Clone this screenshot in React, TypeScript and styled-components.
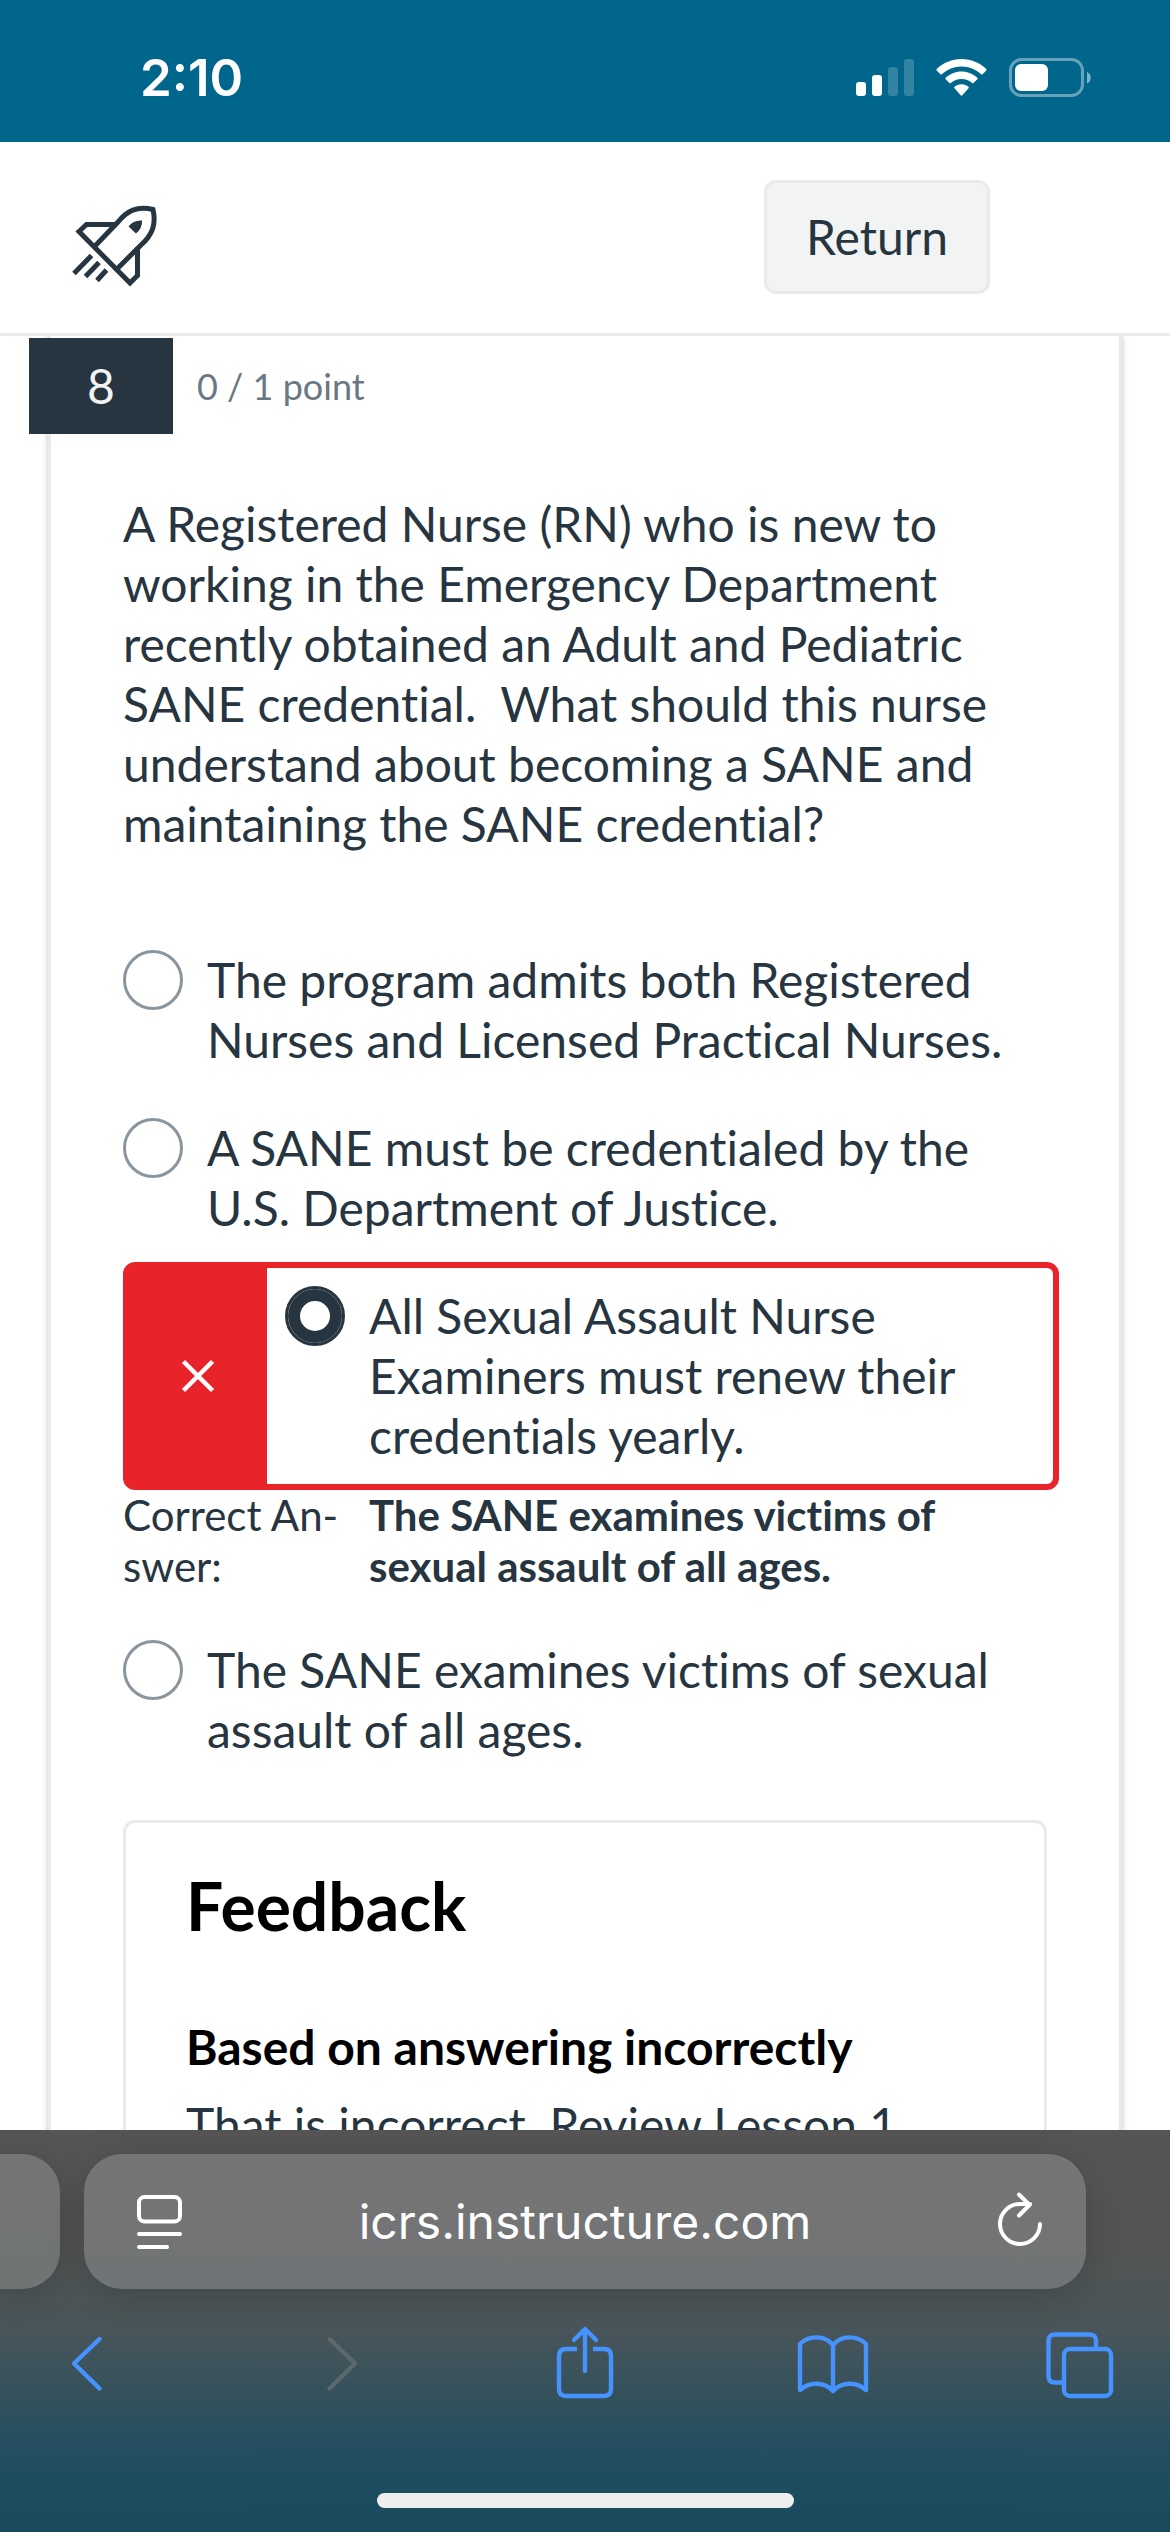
import React from "react";
import styled, { createGlobalStyle } from "styled-components";

const ink = "#273540";
const red = "#e8242a";
const line = "#e8eaec";
const blue = "#4693ff";

const GlobalStyle = createGlobalStyle`
  *, *::before, *::after { box-sizing: border-box; }
  html, body { margin: 0; padding: 0; background: #fff; }
  body {
    font-family: Lato, "Open Sans", sans-serif;
    font-variant-ligatures: none;
    color: ${ink};
  }
  button, input { font: inherit; color: inherit; }
  p, h2, h3 { margin: 0; }
  svg { display: block; }
`;

const Screen = styled.div`
  display: flex;
  flex-direction: column;
  height: 100vh;
  overflow: hidden;
`;

const StatusBar = styled.div`
  display: flex;
  flex: none;
  align-items: center;
  justify-content: space-between;
  height: 142px;
  padding: 14px 78px 0 140px;
  background: #00668c;
  color: #fff;
`;

const Clock = styled.time`
  font: 600 51px/60px Inter, sans-serif;
`;

const StatusIcons = styled.div`
  display: flex;
  align-items: center;
  gap: 22px;
`;

const Header = styled.header`
  display: flex;
  flex: none;
  align-items: center;
  justify-content: space-between;
  height: 194px;
  padding: 0 180px 2px 66px;
  border-bottom: 3px solid ${line};
  background: #fff;
`;

const LogoLink = styled.a`
  display: block;
  padding-top: 18px;
  color: ${ink};
`;

const ReturnButton = styled.button`
  height: 114px;
  padding: 0 39px;
  border: 3px solid ${line};
  border-radius: 12px;
  background: #f2f4f4;
  font-size: 48px;
  line-height: 60px;
`;

const Main = styled.main`
  flex: 1;
  min-height: 0;
  padding: 0 48px;
  overflow: hidden;
`;

const QuestionCard = styled.section`
  min-height: 100%;
  padding-top: 2px;
  border: solid ${line};
  border-width: 0 3px;
  box-shadow: 0 0 6px rgba(0, 0, 0, 0.25);
`;

const QuestionHeader = styled.div`
  display: flex;
  align-items: center;
  gap: 24px;
  margin-left: -22px;
`;

const QuestionNumber = styled.div`
  width: 144px;
  background: ${ink};
  color: #f2f4f4;
  font-size: 48px;
  line-height: 96px;
  text-align: center;
`;

const Points = styled.p`
  color: #6a7883;
  font-size: 36px;
  line-height: 48px;
`;

const QuestionBody = styled.div`
  padding: 60px 72px 0;
`;

const Prompt = styled.p`
  margin-bottom: 72px;
  font-size: 48px;
  line-height: 60px;
`;

const Choices = styled.div`
  margin-bottom: 36px;
`;

const Choice = styled.label`
  display: flex;
  flex: 1;
  align-items: flex-start;
  gap: 24px;
  padding: 24px 0;
  font-size: 48px;
  line-height: 60px;
`;

const Radio = styled.input`
  flex: none;
  width: 60px;
  height: 60px;
  margin: 0;
  appearance: none;
  border: 3px solid #8b959e;
  border-radius: 50%;
  background: #fff;

  &:checked {
    border-color: ${ink};
    box-shadow: inset 0 0 0 12px ${ink};
  }
`;

const WrongAnswer = styled.div`
  display: flex;
  margin-right: -12px;
  border: 6px solid ${red};
  border-radius: 12px;

  ${Choice} {
    padding: 18px;
  }
`;

const WrongMark = styled.div`
  display: flex;
  flex: none;
  align-items: center;
  justify-content: center;
  width: 138px;
  background: ${red};
`;

const CorrectAnswer = styled.div`
  display: grid;
  grid-template-columns: 222px 1fr;
  column-gap: 24px;
  padding-bottom: 24px;
  font-size: 42px;
  line-height: 51px;
`;

const Feedback = styled.section`
  padding: 42px 60px;
  border: 3px solid ${line};
  border-radius: 12px;
`;

const FeedbackTitle = styled.h2`
  margin-bottom: 70px;
  color: #000;
  font-size: 66px;
  line-height: 82px;
`;

const FeedbackHeading = styled.h3`
  margin-bottom: 18px;
  color: #000;
  font-size: 48px;
  line-height: 60px;
`;

const FeedbackText = styled.p`
  font-size: 48px;
  line-height: 60px;
`;

const BrowserBar = styled.footer`
  z-index: 1;
  display: flex;
  flex: none;
  flex-direction: column;
  height: 402px;
  padding: 24px 0;
  overflow: hidden;
  background: linear-gradient(
    #555555 0%,
    #525554 32%,
    #48555a 50%,
    #2f505c 70%,
    #264f60 76%,
    #1c4c5f 90%,
    #1a4a5d 100%
  );
`;

const TabStrip = styled.div`
  display: flex;
  flex: none;
  gap: 24px;
  height: 135px;
  padding-right: 84px;
`;

const NextTab = styled.div`
  width: 60px;
  border-radius: 0 38px 38px 0;
  background: linear-gradient(#757575, #707475);
  box-shadow: 0 6px 36px rgba(0, 0, 0, 0.18);
`;

const AddressBar = styled.div`
  display: flex;
  flex: 1;
  align-items: center;
  padding: 0 42px;
  border-radius: 38px;
  background: linear-gradient(#757575, #737475 60%, #6f7476);
  box-shadow: 0 6px 36px rgba(0, 0, 0, 0.18);
  color: #fff;
`;

const AddressInput = styled.input`
  flex: 1;
  min-width: 0;
  padding: 0;
  border: 0;
  outline: 0;
  background: none;
  font: 400 48px/60px Inter, sans-serif;
  text-align: center;
`;

const IconButton = styled.button`
  flex: none;
  padding: 0;
  border: 0;
  background: none;
  color: inherit;
`;

const Toolbar = styled.nav`
  display: flex;
  flex: none;
  justify-content: space-between;
  padding: 36px 48px 0;
  color: ${blue};
`;

const HomeIndicator = styled.div`
  flex: none;
  align-self: center;
  width: 417px;
  height: 15px;
  margin-top: auto;
  border-radius: 8px;
  background: #eeeeee;
`;

const choices = [
  "The program admits both Registered Nurses and Licensed Practical Nurses.",
  "A SANE must be credentialed by the U.S. Department of Justice.",
  "All Sexual Assault Nurse Examiners must renew their credentials yearly.",
  "The SANE examines victims of sexual assault of all ages.",
];
const chosen = 2;

function Signal() {
  return (
    <svg width="58" height="40" viewBox="0 0 58 40" fill="#fff" aria-hidden="true">
      <rect x="0" y="24" width="10" height="14" rx="3" />
      <rect x="16" y="17" width="10" height="21" rx="3" />
      <rect x="32" y="9" width="10" height="29" rx="3" opacity="0.2" />
      <rect x="48" y="1" width="10" height="37" rx="3" opacity="0.2" />
    </svg>
  );
}

function Wifi() {
  return (
    <svg width="51" height="40" viewBox="0 0 51 40" fill="#fff" aria-hidden="true">
      <path d="M25.500 1C35 1 43.800 4.700 50.300 11Q51 11.700 50.300 12.500L46.600 16.200Q45.900 16.900 45.100 16.200C39.900 11.300 33 8.400 25.500 8.400S11.100 11.300 5.900 16.200Q5.100 16.900 4.400 16.200L.7 12.500Q0 11.700.7 11C7.200 4.700 16 1 25.500 1Z" />
      <path d="M25.500 13.500C31.600 13.500 37.100 15.900 41.300 19.700Q42 20.400 41.300 21.200L37.600 24.900Q36.900 25.600 36.100 24.900C33.300 22.400 29.600 20.900 25.500 20.900S17.700 22.400 14.900 24.900Q14.100 25.600 13.400 24.900L9.700 21.200Q9 20.400 9.700 19.700C13.900 15.900 19.400 13.500 25.500 13.500Z" />
      <path d="M25.500 26.200C28.300 26.200 30.700 27.200 32.500 28.700Q33.200 29.400 32.500 30.200L26.300 37.300Q25.500 38.100 24.700 37.300L18.500 30.200Q17.800 29.400 18.500 28.700C20.300 27.200 22.700 26.200 25.500 26.200Z" />
    </svg>
  );
}

function Battery() {
  return (
    <svg width="83" height="40" viewBox="0 0 83 40" aria-hidden="true">
      <rect x="1.500" y="1.500" width="72" height="36" rx="11" fill="none" stroke="#fff" strokeWidth="3" opacity="0.4" />
      <rect x="6" y="6" width="33" height="27" rx="6" fill="#fff" />
      <path d="M78 14c5 2 5 9.500 0 11.500z" fill="#fff" opacity="0.5" />
    </svg>
  );
}

function Rocket() {
  return (
    <svg width="96" height="96" viewBox="66 198 96 96" fill="none" stroke="currentColor" strokeWidth="5" aria-hidden="true">
      <path d="M94.500 246.500L118 222C127 211 137 205.500 153 209.500C156.500 225 152 235 141 245L117.500 268.500" />
      <path d="M117 224.500H86.500L79 231.500L130 283L137.500 275.500V247" />
      <path d="M91.500 255.500L74 273.500M99 262.500L85.500 276.500M106.500 270L97 280.500" />
      <path d="M128.500 226.500Q133 220 142 220.500Q142.500 228 136 233.500Z" fill="currentColor" stroke="none" />
    </svg>
  );
}

function Cross() {
  return (
    <svg width="34" height="34" viewBox="0 0 34 34" fill="none" stroke="#fff" strokeWidth="4.500" aria-label="Incorrect">
      <path d="M2.500 2.500L31.500 31.500M31.500 2.500L2.500 31.500" />
    </svg>
  );
}

function PageMenuIcon() {
  return (
    <svg width="60" height="60" viewBox="126 2192 60 60" fill="none" stroke="#fff" strokeWidth="4" strokeLinecap="round" aria-hidden="true">
      <rect x="139" y="2197" width="41" height="24.500" rx="5.500" />
      <path d="M139 2234H180M139 2247H167" />
    </svg>
  );
}

function ReloadIcon() {
  return (
    <svg width="60" height="60" viewBox="984 2192 60 60" fill="none" stroke="#fff" strokeWidth="4" strokeLinecap="round" strokeLinejoin="round" aria-hidden="true">
      <path d="M1040 2224A20 20 0 1 1 1020 2204H1030" />
      <path d="M1019 2194.500L1029.500 2205L1019 2215.500" />
    </svg>
  );
}

function ToolIcon({ children }: { children: React.ReactNode }) {
  return (
    <svg width="76" height="78" viewBox="0 0 76 78" fill="none" stroke="currentColor" strokeWidth="4.400" strokeLinecap="round" strokeLinejoin="round" aria-hidden="true">
      {children}
    </svg>
  );
}

const tools = [
  { label: "Back", art: <path d="M51.500 14L26 38.500L51.500 63.500" /> },
  { label: "Forward", art: <path d="M31.500 14L57 38.500L31.500 63.500" stroke="#5b686d" /> },
  {
    label: "Share",
    art: (
      <>
        <path d="M30 24H19Q12 24 12 31V64Q12 71 19 71H57Q64 71 64 64V31Q64 24 57 24H46" strokeLinecap="butt" />
        <path d="M38 46V5M27 15L38 4L49 15" />
      </>
    ),
  },
  {
    label: "Bookmarks",
    art: (
      <path d="M36 20C28 10 12 10 3 19V65C13 56 28 57 36 66C44 57 59 56 69 65V19C60 10 44 10 36 20ZM36 20V66" />
    ),
  },
  {
    label: "Tabs",
    art: (
      <>
        <rect x="18" y="24" width="47" height="47" rx="6" />
        <path d="M50 24V16Q50 9.500 43 9.500H9Q2.500 9.500 2.500 16V51Q2.500 57.500 9 57.500H18" strokeLinecap="butt" />
      </>
    ),
  },
];

export default function App() {
  return (
    <Screen>
      <GlobalStyle />
      <StatusBar>
        <Clock>2:10</Clock>
        <StatusIcons>
          <Signal />
          <Wifi />
          <Battery />
        </StatusIcons>
      </StatusBar>

      <Header>
        <LogoLink href="#" aria-label="Quizzes">
          <Rocket />
        </LogoLink>
        <ReturnButton type="button">Return</ReturnButton>
      </Header>

      <Main>
        <QuestionCard>
          <QuestionHeader>
            <QuestionNumber>8</QuestionNumber>
            <Points>0 / 1 point</Points>
          </QuestionHeader>
          <QuestionBody>
            <Prompt id="prompt">
              A Registered Nurse (RN) who is new to working in the Emergency Department recently
              obtained an Adult and Pediatric SANE credential.&nbsp; What should this nurse
              understand about becoming a SANE and maintaining the SANE credential?
            </Prompt>
            <Choices role="radiogroup" aria-labelledby="prompt">
              {choices.map((text, i) => {
                const option = (
                  <Choice key={text}>
                    <Radio type="radio" name="answer" defaultChecked={i === chosen} />
                    <span>{text}</span>
                  </Choice>
                );
                if (i !== chosen) return option;
                return (
                  <React.Fragment key={text}>
                    <WrongAnswer>
                      <WrongMark>
                        <Cross />
                      </WrongMark>
                      {option}
                    </WrongAnswer>
                    <CorrectAnswer>
                      <span>Correct An&shy;swer:</span>
                      <strong>The SANE examines victims of sexual assault of all ages.</strong>
                    </CorrectAnswer>
                  </React.Fragment>
                );
              })}
            </Choices>
            <Feedback>
              <FeedbackTitle>Feedback</FeedbackTitle>
              <FeedbackHeading>Based on answering incorrectly</FeedbackHeading>
              <FeedbackText>That is incorrect. Review Lesson 1</FeedbackText>
            </Feedback>
          </QuestionBody>
        </QuestionCard>
      </Main>

      <BrowserBar>
        <TabStrip>
          <NextTab />
          <AddressBar>
            <IconButton type="button" aria-label="Page menu">
              <PageMenuIcon />
            </IconButton>
            <AddressInput type="text" aria-label="Address" defaultValue="icrs.instructure.com" />
            <IconButton type="button" aria-label="Reload">
              <ReloadIcon />
            </IconButton>
          </AddressBar>
        </TabStrip>
        <Toolbar>
          {tools.map((tool) => (
            <IconButton key={tool.label} type="button" aria-label={tool.label}>
              <ToolIcon>{tool.art}</ToolIcon>
            </IconButton>
          ))}
        </Toolbar>
        <HomeIndicator />
      </BrowserBar>
    </Screen>
  );
}
